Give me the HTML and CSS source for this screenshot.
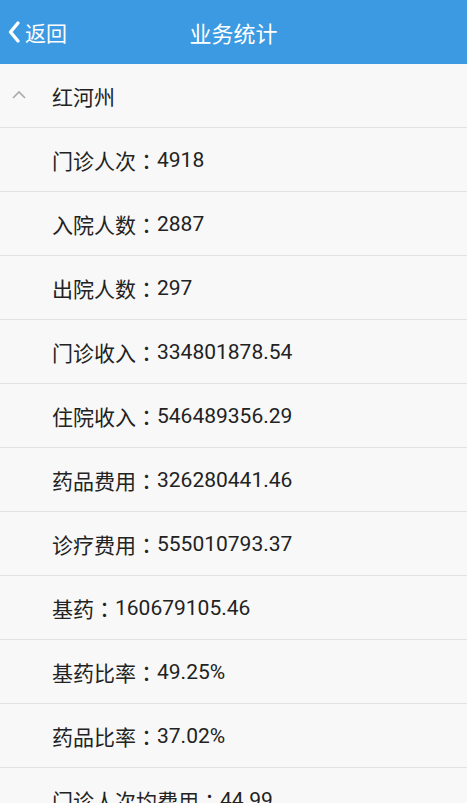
FILE: index.html
```html
<!DOCTYPE html>
<html lang="zh-CN">
<head>
  <meta charset="UTF-8">
  <title>业务统计</title>
  <link rel="stylesheet" href="styles.css">
</head>
<body>
  <header class="topbar">
    <a class="back" href="#">
      <svg class="back-icon" width="14" height="24" viewBox="0 0 14 24">
        <path d="M11 3 L3.5 12 L11 21" fill="none" stroke="#fff" stroke-width="3.4" stroke-linecap="round" stroke-linejoin="round"/>
      </svg>
      <span>返回</span>
    </a>
    <h1 class="title">业务统计</h1>
  </header>

  <ul class="list">
    <li class="row group">
      <svg class="caret" width="16" height="10" viewBox="0 0 16 10">
        <path d="M2 8 L8 2 L14 8" fill="none" stroke="#aaa" stroke-width="1.6"/>
      </svg>
      <span>红河州</span>
    </li>
    <li class="row">门诊人次<span class="sep">：</span>4918</li>
    <li class="row">入院人数<span class="sep">：</span>2887</li>
    <li class="row">出院人数<span class="sep">：</span>297</li>
    <li class="row">门诊收入<span class="sep">：</span>334801878.54</li>
    <li class="row">住院收入<span class="sep">：</span>546489356.29</li>
    <li class="row">药品费用<span class="sep">：</span>326280441.46</li>
    <li class="row">诊疗费用<span class="sep">：</span>555010793.37</li>
    <li class="row">基药<span class="sep">：</span>160679105.46</li>
    <li class="row">基药比率<span class="sep">：</span>49.25%</li>
    <li class="row">药品比率<span class="sep">：</span>37.02%</li>
    <li class="row">门诊人次均费用<span class="sep">：</span>44.99</li>
  </ul>
</body>
</html>
```

FILE: styles.css
```css
body {
  margin: 0;
  background: #f8f8f8;
  font-family: Roboto, "Noto Sans CJK SC", sans-serif;
  color: #222;
  overflow: hidden;
}
.topbar {
  height: 64px;
  background: #3b9ae1;
  color: #fff;
  display: flex;
  align-items: center;
  justify-content: center;
  position: relative;
}
.back {
  position: absolute;
  left: 7px;
  top: 0;
  bottom: 0;
  display: flex;
  align-items: center;
  gap: 4px;
  color: #fff;
  text-decoration: none;
  font-size: 21px;
}
.title {
  margin: 0;
  font-size: 22px;
  font-weight: normal;
}
.list {
  list-style: none;
  margin: 0;
  padding: 0;
}
.row {
  height: 63px;
  border-bottom: 1px solid #e2e2e2;
  display: flex;
  align-items: center;
  padding-left: 52px;
  font-size: 21px;
  white-space: pre;
}
.sep {
  font-family: "Noto Sans CJK TC", sans-serif;
}
.group {
  position: relative;
}
.caret {
  position: absolute;
  left: 11px;
  top: 26px;
}
```
